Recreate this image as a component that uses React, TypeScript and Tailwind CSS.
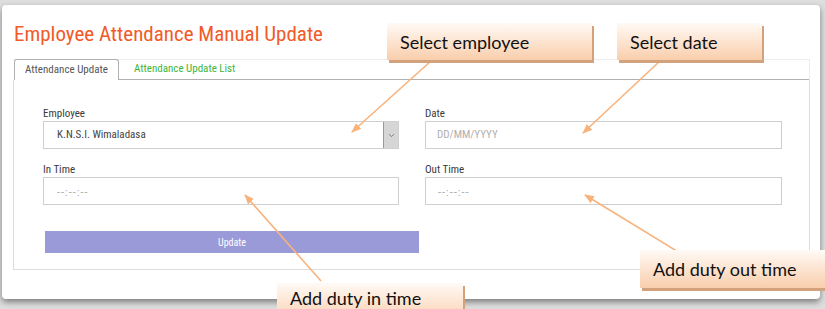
import { ChevronDown } from 'lucide-react'

const fieldLabel = "block text-[11px] leading-[14px] text-[#3a3a3a] font-['Roboto',sans-serif] font-stretch-condensed"
const fieldBox = 'h-[28px] w-full border border-[#cfcfcf] bg-white'
const callout =
  "absolute flex items-center bg-[linear-gradient(180deg,#fffaf6_0%,#fde6d4_45%,#f9ceac_100%)] shadow-[2px_3px_0_#d3a17c] font-['Lato',sans-serif] text-[18px] leading-none text-[#111]"

function Arrows() {
  const lines = [
    { x1: 431, y1: 61, x2: 352, y2: 132 },
    { x1: 660, y1: 61, x2: 583, y2: 133 },
    { x1: 321, y1: 281, x2: 245, y2: 195 },
    { x1: 698, y1: 264, x2: 585, y2: 195 },
  ]
  return (
    <svg className="pointer-events-none absolute left-0 top-0" width={825} height={309} viewBox="0 0 825 309">
      <defs>
        <marker id="tip" viewBox="0 0 10 8" refX="9" refY="4" markerWidth="10" markerHeight="8" markerUnits="userSpaceOnUse" orient="auto">
          <path d="M0,0 L10,4 L0,8 z" fill="#f8b37d" />
        </marker>
      </defs>
      {lines.map((l, i) => (
        <line key={i} {...l} stroke="#f8b37d" strokeWidth={1.6} markerEnd="url(#tip)" />
      ))}
    </svg>
  )
}

export default function App() {
  return (
    <div className="relative h-[309px] w-[825px] overflow-hidden bg-[#dedede] pl-[2px] pt-[5px]">
      <div className="h-[294px] w-[818px] rounded-[4px] bg-white pl-[11px] pr-[10px] pt-[14px] shadow-[0_3px_6px_rgba(0,0,0,0.45)]">
        <h1 className="h-[31px] pl-[1px] font-['Roboto',sans-serif] text-[21px] leading-[30px] text-[#f25a29] font-stretch-condensed">
          Employee Attendance Manual Update
        </h1>

        <div className="mt-[9px] flex h-[21px] items-end border-t border-r border-[#ececec] font-['Roboto',sans-serif] font-stretch-condensed">
          <div className="ml-[1px] flex h-[21px] w-[105px] items-center justify-center rounded-t-[3px] border border-b-0 border-[#b0b0b0] bg-white text-[11px] text-[#555]">
            Attendance Update
          </div>
          <div className="flex h-[21px] flex-1 items-center border-b border-[#b0b0b0] pl-[15px] text-[11px] text-[#3cb63a]">
            Attendance Update List
          </div>
        </div>

        <div className="h-[190px] border border-t-0 border-[#dddddd] px-[29px] pt-[27px]">
          <div className="grid grid-cols-[356px_357px] gap-x-[26px] gap-y-[14px]">
            <div>
              <label className={fieldLabel}>Employee</label>
              <div className={`${fieldBox} flex items-center`}>
                <span className="flex-1 pl-[13px] font-['Roboto',sans-serif] text-[11px] text-[#444] font-stretch-condensed">
                  K.N.S.I. Wimaladasa
                </span>
                <span className="flex h-full w-[15px] items-center justify-center border-l border-[#999] bg-[#d6d6d6]">
                  <ChevronDown size={9} strokeWidth={2} className="text-[#666]" />
                </span>
              </div>
            </div>
            <div>
              <label className={fieldLabel}>Date</label>
              <div className={`${fieldBox} flex items-center pl-[11px] font-['Roboto',sans-serif] text-[11px] text-[#b0b0b0] font-stretch-condensed`}>
                DD/MM/YYYY
              </div>
            </div>
            <div>
              <label className={fieldLabel}>In Time</label>
              <div className={`${fieldBox} flex items-end pb-[3px] pl-[13px] font-['Roboto',sans-serif] text-[11px] tracking-[1px] text-[#aaa]`}>
                --:--:--
              </div>
            </div>
            <div>
              <label className={fieldLabel}>Out Time</label>
              <div className={`${fieldBox} flex items-end pb-[3px] pl-[12px] font-['Roboto',sans-serif] text-[11px] tracking-[1px] text-[#aaa]`}>
                --:--:--
              </div>
            </div>
          </div>

          <button
            type="button"
            className="ml-[2px] mt-[26px] flex h-[22px] w-[374px] items-center justify-center bg-[#9a9ad9] font-['Roboto',sans-serif] text-[10px] text-white font-stretch-condensed"
          >
            Update
          </button>
        </div>
      </div>

      <Arrows />

      <div className={`${callout} left-[387px] top-[23px] h-[37px] w-[205px] pl-[13px]`}>Select employee</div>
      <div className={`${callout} left-[617px] top-[23px] h-[37px] w-[145px] pl-[13px]`}>Select date</div>
      <div className={`${callout} left-[640px] top-[250px] h-[38px] w-[185px] pl-[13px]`}>Add duty out time</div>
      <div className={`${callout} left-[277px] top-[283px] h-[40px] w-[186px] pl-[13px] pb-[10px]`}>Add duty in time</div>
    </div>
  )
}
